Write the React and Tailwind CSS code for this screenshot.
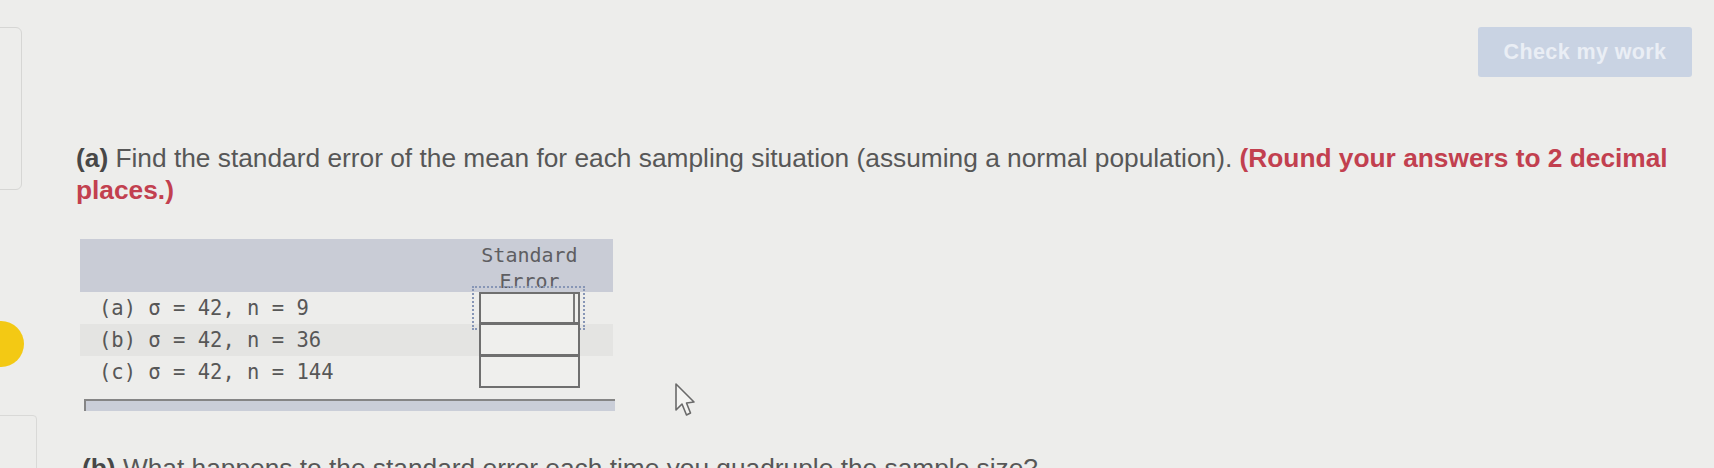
import React from "react";

function Cursor() {
  return (
    <svg
      className="absolute left-[674px] top-[382px]"
      width="22"
      height="36"
      viewBox="0 0 22 36"
    >
      <path
        d="M2 2 L2 28 L8 22 L12.5 33 L16.5 31 L12.5 21 L20 20 Z"
        fill="#f4f4f2"
        stroke="#6a6a6a"
        strokeWidth="1.6"
        strokeLinejoin="round"
      />
    </svg>
  );
}

const rows = [
  { label: "(a) σ = 42, n = 9", stripe: false, first: true },
  { label: "(b) σ = 42, n = 36", stripe: true },
  { label: "(c) σ = 42, n = 144", stripe: false },
];

export default function App() {
  return (
    <div className="relative w-[1714px] h-[468px] overflow-hidden bg-[#ededeb] font-['Liberation_Sans',Arial,sans-serif]">
      {/* fragments of neighbouring UI at the left edge */}
      <div className="absolute left-[-12px] top-[27px] w-[34px] h-[163px] rounded-md border border-[#d6d6d4]" />
      <div className="absolute left-[-23px] top-[321px] w-[47px] h-[46px] rounded-full bg-[#f3c914]" />
      <div className="absolute left-[-12px] top-[415px] w-[49px] h-[80px] rounded border border-[#d9d9d7]" />

      <div className="flex flex-col pl-[76px] pr-[22px]">
        <div className="flex justify-end pt-[27px]">
          <button className="w-[214px] h-[50px] rounded-[3px] bg-[#c9d3e3] text-[#eaeef5] font-bold text-[21.5px] tracking-[0.4px]">
            Check my work
          </button>
        </div>

        <p className="mt-[65px] text-[26.3px] leading-[32px] text-[#575757]">
          <span className="font-bold text-[#474747]">(a)</span> Find the standard
          error of the mean for each sampling situation (assuming a normal
          population).{" "}
          <span className="font-bold text-[#c2404f]">
            (Round your answers to 2 decimal places.)
          </span>
        </p>

        <div className="ml-[4px] mt-[33px] w-[533px] font-['DejaVu_Sans_Mono',monospace] text-[#575757]">
          <div className="flex h-[53px] bg-[#c9ccd6]">
            <div className="flex-1" />
            <div className="w-[101px] mr-[33px] pt-[3px] text-center text-[20px] leading-[26px] text-[#5e5e62]">
              Standard
              <br />
              Error
            </div>
          </div>
          {rows.map((r) => (
            <div
              key={r.label}
              className={`flex h-[32px] items-center ${r.stripe ? "bg-[#e4e4e2]" : ""}`}
            >
              <div className="flex-1 pl-[19px] text-[20.5px] whitespace-pre">
                {r.label}
              </div>
              <div className="relative w-[101px] h-[32px] mr-[33px]">
                {r.first && (
                  <div className="absolute left-[-7px] top-[-6px] w-[113px] h-[44px] border-2 border-dotted border-[#8796b6]" />
                )}
                <div
                  className={`flex justify-end h-full bg-[#efefed] border-2 border-[#6f6f6f] ${r.first ? "" : "border-t-[1px]"}`}
                >
                  {r.first && <div className="w-[2px] h-full bg-[#7a7a7a] mr-[3px]" />}
                </div>
              </div>
            </div>
          ))}
        </div>

        <div className="ml-[8px] mt-[11px] w-[531px] h-[12px] bg-[#caced8] border-t-2 border-l-2 border-[#858585]" />

        <p className="ml-[6px] mt-[41px] text-[26.3px] leading-[32px] text-[#575757] whitespace-nowrap">
          <span className="font-bold text-[#474747]">(b)</span> What happens to
          the standard error each time you quadruple the sample size?
        </p>
      </div>

      <Cursor />
    </div>
  );
}
